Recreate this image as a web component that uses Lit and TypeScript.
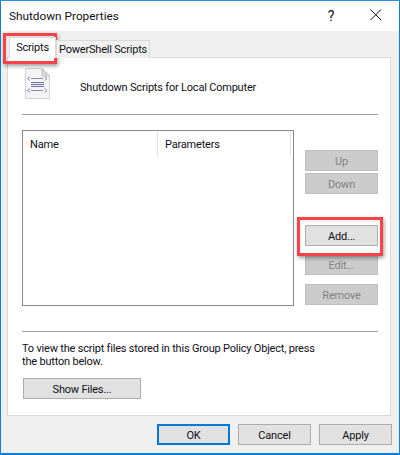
import { LitElement, html, css } from "lit";
import { customElement } from "lit/decorators.js";

@customElement("app-root")
export class AppRoot extends LitElement {
  static styles = css`
    :host { display: block; width: 400px; height: 455px; font-family: Roboto, "Noto Sans", sans-serif; font-size: 11px; letter-spacing: -0.2px; color: #101018; }
    * { box-sizing: border-box; }
    .win { position: relative; width: 400px; height: 455px; border: 1px solid #0f7fd4; border-top-color: #2a8fdc; border-bottom-width: 2px; background: #f0f0f0; display: flex; flex-direction: column; overflow: hidden; }
    .title { height: 30px; background: #fff; display: flex; align-items: center; padding: 0 0 1px 8px; flex: none; font-size: 11.8px; letter-spacing: 0; }
    .title .t { flex: 1; }
    .help { width: 30px; text-align: center; font-size: 14px; margin-right: 7px; }
    .x { width: 46px; display: flex; justify-content: center; margin-right: 0; padding-bottom: 1px; }
    .body { flex: 1; display: flex; flex-direction: column; padding: 7px 7px 0 6px; }
    .tabs { display: flex; align-items: flex-end; height: 20px; padding-left: 2px; position: relative; z-index: 1; margin-bottom: -1px; }
    .tab { height: 18px; display: flex; align-items: center; padding: 0 3px; border: 1px solid #d9d9d9; border-bottom: 0; background: #f0f0f0; }
    .tab.active { height: 21px; background: #fff; width: 47px; justify-content: center; padding-bottom: 1px; }
    .tab.ps { width: 94px; margin-left: 0; justify-content: center; white-space: nowrap; }
    .panel { height: 359px; width: 384px; background: #fff; border: 1px solid #d9d9d9; padding: 0 12px 0 14px; display: flex; flex-direction: column; }
    .head { height: 57px; display: flex; align-items: center; border-bottom: 1px solid #a0a0a0; padding-left: 3px; margin-bottom: 15px; flex: none; }
    .head svg { flex: none; margin-right: 30px; margin-top: -6px; }
    .head span { margin-top: 3px; white-space: nowrap; }
    .mid { display: flex; height: 176px; justify-content: space-between; flex: none; }
    .list { width: 272px; height: 176px; border: 1px solid #828790; padding: 1px 2px 0 0; }
    .cols { height: 24px; display: flex; }
    .col { display: flex; align-items: center; padding-left: 7px; border-right: 1px solid #e5e5e5; }
    .col.n { width: 135px; }
    .col.p { flex: 1; }
    .side { width: 73px; display: flex; flex-direction: column; padding-top: 20px; }
    .btn { height: 21px; border: 1px solid #adadad; background: #e1e1e1; display: flex; align-items: center; justify-content: center; flex: none; white-space: nowrap; padding-top: 1px; }
    .btn.dis { background: #cccccc; border-color: #bfbfbf; color: #838383; }
    .down { margin-top: 2px; }
    .add { margin-top: 31px; }
    .edit { margin-top: 8px; }
    .rem { margin-top: 9px; }
    .sep { border-top: 1px solid #a0a0a0; margin-top: 25px; flex: none; }
    .note { margin-top: 10px; line-height: 13px; width: 305px; height: 26px; }
    .show { width: 118px; margin-left: 1px; margin-top: 10px; }
    .foot { display: flex; justify-content: flex-end; gap: 8px; padding-top: 8px; }
    .foot .btn { width: 73px; }
    .ok { border: 2px solid #0078d7; }
    .mark { position: absolute; border: 3px solid #f8434a; box-shadow: 1px 2px 4px rgba(0,0,0,.4), inset 1px 1px 3px rgba(0,0,0,.08); }
    .m1 { left: 2px; top: 32px; width: 54px; height: 31px; }
    .m2 { left: 296px; top: 216px; width: 86px; height: 39px; }
  `;

  render() {
    return html`<div class="win">
      <div class="title">
        <span class="t">Shutdown Properties</span>
        <span class="help">?</span>
        <span class="x"><svg width="12" height="12" viewBox="0 0 12 12"><path d="M.5 .5 L11 11 M11 .5 L.5 11" stroke="#111" stroke-width="1" fill="none"/></svg></span>
      </div>
      <div class="body">
        <div class="tabs">
          <div class="tab active">Scripts</div>
          <div class="tab ps">PowerShell Scripts</div>
        </div>
        <div class="panel">
          <div class="head">
            <svg width="25" height="31" viewBox="0 0 25 31">
              <path d="M.5 .5 H17 L24.5 8 V30.5 H.5 Z" fill="#f4f4f6" stroke="#d4d4d8"/>
              <path d="M17 .5 V8 H24.5 Z" fill="#d8d8dc" stroke="#c4c4c8"/>
              <g stroke="#8a8aa8" stroke-width="1" fill="none">
                <path d="M6 10.5 H18 M5 8.5 L2.5 10.5 L5 12.5 M19.5 8.5 L22 10.5 L19.5 12.5"/>
                <path d="M6 14.5 H19 M6 16.5 H19 M6 18.5 H19" stroke="#7070a0"/>
                <path d="M6 22.5 H18 M5 20.5 L2.5 22.5 L5 24.5 M19.5 20.5 L22 22.5 L19.5 24.5"/>
              </g>
            </svg>
            <span>Shutdown Scripts for Local Computer</span>
          </div>
          <div class="mid">
            <div class="list">
              <div class="cols">
                <div class="col n">Name</div>
                <div class="col p">Parameters</div>
              </div>
            </div>
            <div class="side">
              <div class="btn dis">Up</div>
              <div class="btn dis down">Down</div>
              <div class="btn add">Add...</div>
              <div class="btn dis edit">Edit...</div>
              <div class="btn dis rem">Remove</div>
            </div>
          </div>
          <div class="sep"></div>
          <div class="note">To view the script files stored in this Group Policy Object, press the button below.</div>
          <div class="btn show">Show Files...</div>
        </div>
        <div class="foot">
          <div class="btn ok">OK</div>
          <div class="btn">Cancel</div>
          <div class="btn">Apply</div>
        </div>
      </div>
      <div class="mark m1"></div>
      <div class="mark m2"></div>
    </div>`;
  }
}
